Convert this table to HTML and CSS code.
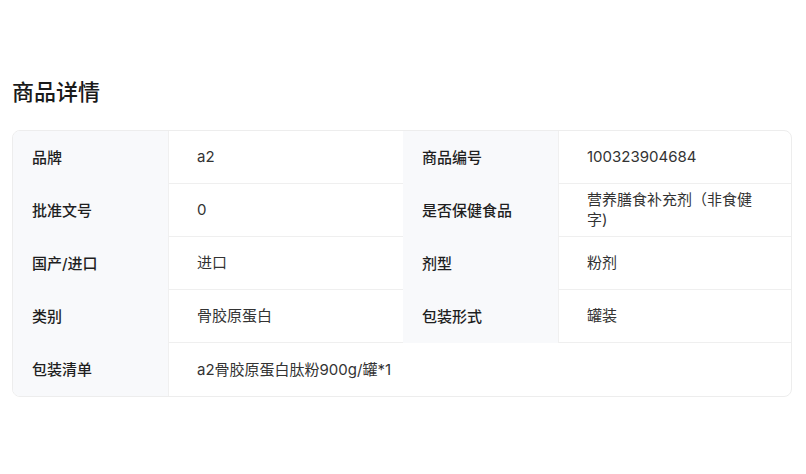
FILE: index.html
```html
<!DOCTYPE html>
<html lang="zh-CN">
<head>
<meta charset="utf-8">
<link rel="stylesheet" href="styles.css">
</head>
<body>
<div class="page">
  <h2 class="title">商品详情</h2>
  <div class="spec">
    <div class="label">品牌</div>
    <div class="value">a2</div>
    <div class="label">商品编号</div>
    <div class="value">100323904684</div>

    <div class="label">批准文号</div>
    <div class="value">0</div>
    <div class="label">是否保健食品</div>
    <div class="value">营养膳食补充剂（非食健字)</div>

    <div class="label">国产/进口</div>
    <div class="value">进口</div>
    <div class="label">剂型</div>
    <div class="value">粉剂</div>

    <div class="label">类别</div>
    <div class="value">骨胶原蛋白</div>
    <div class="label">包装形式</div>
    <div class="value">罐装</div>

    <div class="label">包装清单</div>
    <div class="value wide last">a2骨胶原蛋白肽粉900g/罐*1</div>
  </div>
</div>
</body>
</html>
```

FILE: styles.css
```css
html, body {
  margin: 0;
  padding: 0;
  background: #ffffff;
}
.page {
  padding: 76px 14px 0 12px;
  font-family: Inter, "Noto Sans CJK SC", sans-serif;
}
.title {
  margin: 0 0 22px 0;
  font-size: 22px;
  line-height: 32px;
  font-weight: 500;
  color: #1a1a1a;
}
.spec {
  display: grid;
  grid-template-columns: 156px 234px 156px 1fr;
  border: 1px solid #ededed;
  border-radius: 8px;
  overflow: hidden;
  font-size: 15px;
  line-height: 20px;
}
.label {
  background: #f8f9fb;
  color: #1f1f1f;
  font-weight: 500;
  padding: 0 18px 0 19px;
  min-height: 53px;
  display: flex;
  align-items: center;
  border-right: 1px solid #f0f0f0;
  box-sizing: border-box;
}
.value {
  color: #333333;
  padding: 6px 28px;
  min-height: 53px;
  display: flex;
  align-items: center;
  border-bottom: 1px solid #efefef;
  box-sizing: border-box;
}
.value.wide {
  grid-column: span 3;
}
.value.last {
  border-bottom: none;
  min-height: 52px;
}
```
